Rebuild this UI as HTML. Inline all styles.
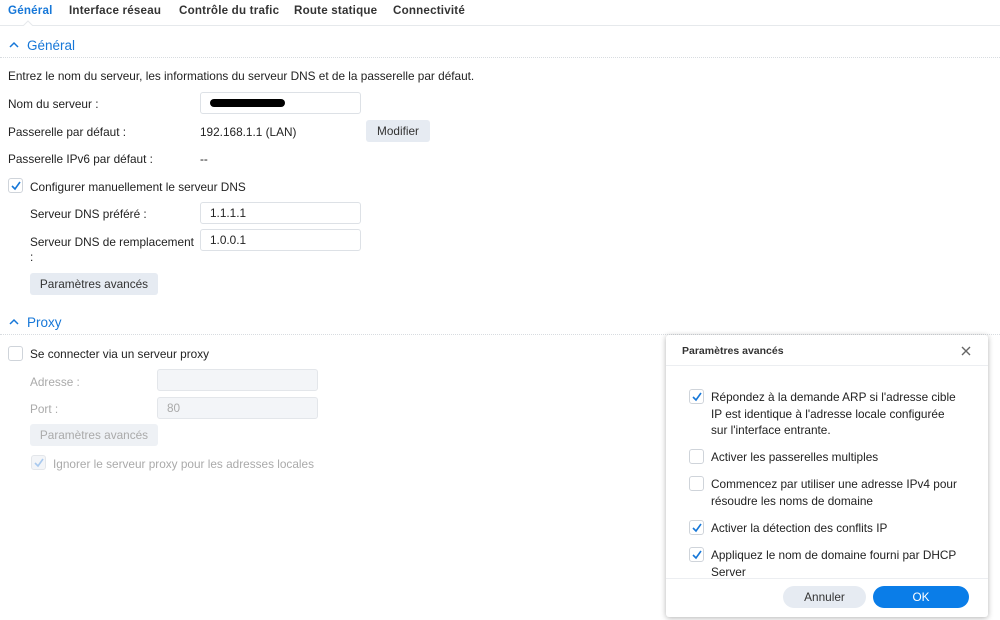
<!DOCTYPE html>
<html><head><meta charset="utf-8"><style>
*{box-sizing:border-box;margin:0;padding:0}
body{width:1000px;height:620px;overflow:hidden;background:#fff;font-family:"Liberation Sans",sans-serif;font-size:11.8px;color:#222;position:relative}
.a{position:absolute;white-space:nowrap}
.tab{top:4px;font-weight:bold;font-size:11.6px;color:#333;letter-spacing:0.2px}
.inp{position:absolute;height:22px;border:1px solid #dde1e6;border-radius:3px;background:#fff;padding-left:9px;line-height:20px;font-size:11.8px}
.dis{background:#f3f5f8;border-color:#e3e6ea;color:#aaa}
.btn{position:absolute;height:22px;border-radius:3px;background:#e6ebf2;text-align:center;line-height:22px;color:#333}
.cb{position:absolute;width:15px;height:15px;border:1px solid #cfd4da;border-radius:3px;background:#fff}
.cb svg{position:absolute;left:1px;top:1px}
.sec{font-size:13.5px;color:#1677d8}
.dot{position:absolute;left:0;height:0;border-top:1px dotted #d8dce0}
.g{color:#aaa}
</style></head><body>
<div class="a tab" style="left:8px;color:#1677d8">Général</div>
<div class="a tab" style="left:69px">Interface réseau</div>
<div class="a tab" style="left:179px">Contrôle du trafic</div>
<div class="a tab" style="left:294px">Route statique</div>
<div class="a tab" style="left:393px">Connectivité</div>
<div class="a" style="left:0;top:25px;width:1000px;border-top:1px solid #e6e9ec"></div>
<svg class="a" style="left:23px;top:20px" width="10" height="6"><path d="M0 6 L5 1 L10 6" fill="#fff" stroke="#e6e9ec"/></svg>

<svg class="a" style="left:9px;top:41px" width="10" height="8"><path d="M1 6 L5 2 L9 6" fill="none" stroke="#1677d8" stroke-width="1.5"/></svg>
<div class="a sec" style="left:27px;top:38px">Général</div>
<div class="dot" style="top:57px;width:1000px"></div>
<div class="a" style="left:8px;top:69px">Entrez le nom du serveur, les informations du serveur DNS et de la passerelle par défaut.</div>
<div class="a" style="left:8px;top:97px">Nom du serveur :</div>
<div class="inp" style="left:200px;top:92px;width:161px"><span style="display:inline-block;margin-top:6px;width:75px;height:8px;background:#000;border-radius:4px"></span></div>
<div class="a" style="left:8px;top:125px">Passerelle par défaut :</div>
<div class="a" style="left:200px;top:125px">192.168.1.1 (LAN)</div>
<div class="btn" style="left:366px;top:120px;width:64px">Modifier</div>
<div class="a" style="left:8px;top:152px">Passerelle IPv6 par défaut :</div>
<div class="a" style="left:200px;top:152px">--</div>
<div class="cb" style="left:8px;top:178px"><svg width="12" height="12"><path d="M2 6 L5 9 L10 2" fill="none" stroke="#1677d8" stroke-width="1.6"/></svg></div>
<div class="a" style="left:30px;top:180px">Configurer manuellement le serveur DNS</div>
<div class="a" style="left:30px;top:207px">Serveur DNS préféré :</div>
<div class="inp" style="left:200px;top:202px;width:161px">1.1.1.1</div>
<div class="a" style="left:30px;top:235px">Serveur DNS de remplacement</div>
<div class="a" style="left:30px;top:250px">:</div>
<div class="inp" style="left:200px;top:229px;width:161px">1.0.0.1</div>
<div class="btn" style="left:30px;top:273px;width:128px">Paramètres avancés</div>

<svg class="a" style="left:9px;top:318px" width="10" height="8"><path d="M1 6 L5 2 L9 6" fill="none" stroke="#1677d8" stroke-width="1.5"/></svg>
<div class="a sec" style="left:27px;top:315px">Proxy</div>
<div class="dot" style="top:334px;width:1000px"></div>
<div class="cb" style="left:8px;top:346px"></div>
<div class="a" style="left:30px;top:347px">Se connecter via un serveur proxy</div>
<div class="a g" style="left:30px;top:375px">Adresse :</div>
<div class="inp dis" style="left:157px;top:369px;width:161px"></div>
<div class="a g" style="left:30px;top:402px">Port :</div>
<div class="inp dis" style="left:157px;top:397px;width:161px">80</div>
<div class="btn" style="left:30px;top:424px;width:128px;background:#eef1f5;color:#aaa">Paramètres avancés</div>
<div class="cb" style="left:31px;top:455px;border-color:#e3e6ea;background:#f3f5f8"><svg width="12" height="12"><path d="M2 6 L5 9 L10 2" fill="none" stroke="#a9c9ee" stroke-width="1.6"/></svg></div>
<div class="a g" style="left:53px;top:457px">Ignorer le serveur proxy pour les adresses locales</div>

<div class="a" style="left:666px;top:335px;width:322px;height:282px;background:#fff;border-radius:3px;box-shadow:0 1px 6px rgba(0,0,0,.3)">
 <div class="a" style="left:16px;top:10px;font-weight:bold;font-size:10.5px;color:#333">Paramètres avancés</div>
 <svg class="a" style="left:295px;top:11px" width="10" height="10"><path d="M1 1 L9 9 M9 1 L1 9" stroke="#666" stroke-width="1.4"/></svg>
 <div class="a" style="left:0;top:30px;width:322px;border-top:1px solid #eceef1"></div>
 <div class="cb" style="left:23px;top:54px"><svg width="12" height="12"><path d="M2 6 L5 9 L10 2" fill="none" stroke="#1677d8" stroke-width="1.6"/></svg></div>
 <div class="a" style="left:45px;top:54px;line-height:16.5px">Répondez à la demande ARP si l'adresse cible<br>IP est identique à l'adresse locale configurée<br>sur l'interface entrante.</div>
 <div class="cb" style="left:23px;top:114px"></div>
 <div class="a" style="left:45px;top:115px">Activer les passerelles multiples</div>
 <div class="cb" style="left:23px;top:141px"></div>
 <div class="a" style="left:45px;top:141px;line-height:16.5px">Commencez par utiliser une adresse IPv4 pour<br>résoudre les noms de domaine</div>
 <div class="cb" style="left:23px;top:185px"><svg width="12" height="12"><path d="M2 6 L5 9 L10 2" fill="none" stroke="#1677d8" stroke-width="1.6"/></svg></div>
 <div class="a" style="left:45px;top:186px">Activer la détection des conflits IP</div>
 <div class="cb" style="left:23px;top:212px"><svg width="12" height="12"><path d="M2 6 L5 9 L10 2" fill="none" stroke="#1677d8" stroke-width="1.6"/></svg></div>
 <div class="a" style="left:45px;top:212px;line-height:16.5px">Appliquez le nom de domaine fourni par DHCP<br>Server</div>
 <div class="a" style="left:0;top:243px;width:322px;border-top:1px solid #eceef1"></div>
 <div class="btn" style="left:117px;top:251px;width:83px;border-radius:11px">Annuler</div>
 <div class="btn" style="left:207px;top:251px;width:96px;border-radius:11px;background:#0a7de8;color:#fff">OK</div>
</div>
</body></html>
